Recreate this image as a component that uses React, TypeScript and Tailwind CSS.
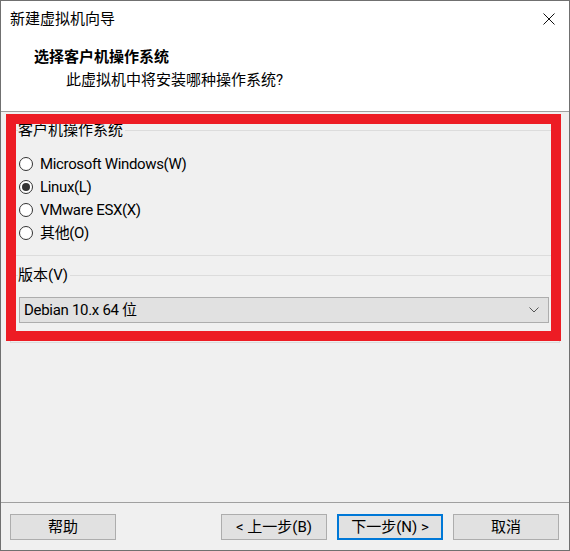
import React from "react";

const FONT = { fontFamily: 'Roboto, "Noto Sans CJK SC", sans-serif' };

function Radio({ label, checked }: { label: string; checked?: boolean }) {
  return (
    <div className="flex h-[23px] items-center">
      <span className="flex h-[14px] w-[14px] items-center justify-center rounded-full border border-[#333333] bg-white">
        {checked && <span className="h-[8px] w-[8px] rounded-full bg-[#333333]" />}
      </span>
      <span className="ml-[7px] text-[15px] leading-[20px] tracking-[-0.35px] text-black">{label}</span>
    </div>
  );
}

function Button({ children, primary }: { children: React.ReactNode; primary?: boolean }) {
  return (
    <button
      className={
        "flex h-[26px] w-[106px] items-center justify-center bg-[#e1e1e1] text-[15px] leading-[20px] text-black " +
        (primary ? "border-2 border-[#0078d7]" : "border border-[#adadad]")
      }
    >
      {children}
    </button>
  );
}

export default function App() {
  return (
    <div style={FONT} className="relative flex h-[551px] w-[570px] flex-col border border-[#707070] bg-[#f0f0f0] text-black">
      {/* header */}
      <div className="h-[110px] bg-white">
        <div className="flex h-[36px] items-center justify-between pl-[9px] pr-[14px]">
          <span className="text-[15px] leading-[20px]">新建虚拟机向导</span>
          <svg width="12" height="12" viewBox="0 0 12 12">
            <path d="M0.5 0.5 L11.5 11.5 M11.5 0.5 L0.5 11.5" stroke="#111" strokeWidth="1" />
          </svg>
        </div>
        <div className="mt-[10px] pl-[33px] text-[15px] font-bold leading-[20px]">选择客户机操作系统</div>
        <div className="mt-[3px] pl-[65px] text-[15px] leading-[20px]">此虚拟机中将安装哪种操作系统?</div>
      </div>
      <div className="h-px bg-[#a0a0a0]" />

      {/* body */}
      <div className="flex flex-1 flex-col pl-[9px] pr-[9px] pt-[8px]">
        <fieldset className="border border-[#dcdcdc] pb-[11px] pl-[8px] pr-[10px] pt-[12px]">
          <legend className="-ml-[1px] pr-[2px] text-[15px] leading-[20px]">客户机操作系统</legend>
          <Radio label="Microsoft Windows(W)" />
          <Radio label="Linux(L)" checked />
          <Radio label="VMware ESX(X)" />
          <Radio label="其他(O)" />
        </fieldset>
        <fieldset className="mt-[9px] border border-[#dcdcdc] pb-[19px] pl-[8px] pr-[10px] pt-[12px]">
          <legend className="-ml-[1px] pr-[2px] text-[15px] leading-[20px]">版本(V)</legend>
          <div className="flex h-[26px] items-center justify-between border border-[#adadad] bg-[#e1e1e1] pl-[4px] pr-[9px]">
            <span className="text-[15px] leading-[20px] tracking-[-0.3px]">Debian 10.x 64 位</span>
            <svg width="10" height="6" viewBox="0 0 10 6">
              <path d="M0.5 0.5 L5 5 L9.5 0.5" fill="none" stroke="#555" strokeWidth="1" />
            </svg>
          </div>
        </fieldset>
      </div>

      {/* footer */}
      <div className="h-px bg-[#a0a0a0]" />
      <div className="flex h-[47px] items-start pl-[9px] pr-[10px] pt-[11px]">
        <Button>帮助</Button>
        <div className="flex-1" />
        <div className="flex gap-[10px]">
          <Button>&lt; 上一步(B)</Button>
          <Button primary>下一步(N) &gt;</Button>
          <Button>取消</Button>
        </div>
      </div>

      {/* red annotation overlay */}
      <div className="pointer-events-none absolute left-[5px] top-[113px] h-[227px] w-[555px] border-[10px] border-[#ed1c24]" />
    </div>
  );
}
